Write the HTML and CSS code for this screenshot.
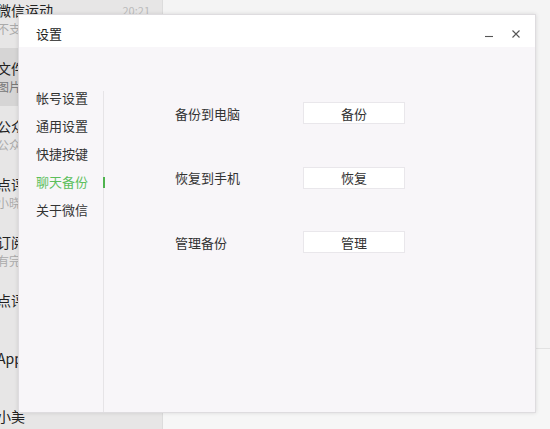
FILE: index.html
```html
<!DOCTYPE html>
<html lang="zh-CN">
<head>
    <meta charset="UTF-8">
    <title>设置</title>
    <link rel="stylesheet" href="styles.css">
</head>
<body>
    <!-- 背后的微信主窗口 -->
    <div class="app">
        <div class="chat-list">
            <div class="chat-item">
                <div class="chat-top"><span class="chat-name">微信运动</span><span class="chat-time">20:21</span></div>
                <div class="chat-sub">不支持的消息类型</div>
            </div>
            <div class="chat-item active">
                <div class="chat-top"><span class="chat-name">文件传输助手</span></div>
                <div class="chat-sub dark">图片</div>
            </div>
            <div class="chat-item">
                <div class="chat-top"><span class="chat-name">公众号</span></div>
                <div class="chat-sub">公众号消息</div>
            </div>
            <div class="chat-item">
                <div class="chat-top"><span class="chat-name">点评</span></div>
                <div class="chat-sub">小晓</div>
            </div>
            <div class="chat-item">
                <div class="chat-top"><span class="chat-name">订阅号</span></div>
                <div class="chat-sub">有完成</div>
            </div>
            <div class="chat-item">
                <div class="chat-top"><span class="chat-name">点评</span></div>
            </div>
            <div class="chat-item">
                <div class="chat-top"><span class="chat-name">Apple</span></div>
            </div>
            <div class="chat-item">
                <div class="chat-top"><span class="chat-name">小美</span></div>
            </div>
        </div>
        <div class="chat-pane">
            <div class="chat-input"></div>
        </div>
    </div>

    <!-- 设置窗口 -->
    <div class="dialog">
        <div class="titlebar">
            <span class="title">设置</span>
            <div class="win-buttons">
                <svg width="10" height="10" viewBox="0 0 10 10"><path d="M1 7.5h8" stroke="#555" stroke-width="1.1"/></svg>
                <svg width="10" height="10" viewBox="0 0 10 10"><path d="M1.5 1.5l7 7M8.5 1.5l-7 7" stroke="#555" stroke-width="1.1"/></svg>
            </div>
        </div>
        <div class="dialog-body">
            <div class="sidebar">
                <div class="menu-item">帐号设置</div>
                <div class="menu-item">通用设置</div>
                <div class="menu-item">快捷按键</div>
                <div class="menu-item active">聊天备份</div>
                <div class="menu-item">关于微信</div>
            </div>
            <div class="content">
                <div class="label">备份到电脑</div>
                <button class="btn">备份</button>
                <div class="label">恢复到手机</div>
                <button class="btn">恢复</button>
                <div class="label">管理备份</div>
                <button class="btn">管理</button>
            </div>
        </div>
    </div>
</body>
</html>
```

FILE: styles.css
```css
body {
    margin: 0;
    width: 550px;
    height: 429px;
    overflow: hidden;
    position: relative;
    font-family: "Noto Sans CJK SC", "Liberation Sans", sans-serif;
    font-size: 13px;
    color: #333;
}

/* 背后的主窗口 */
.app {
    display: flex;
    height: 100%;
    overflow: hidden;
}

.chat-list {
    width: 162px;
    height: 439px;
    overflow: hidden;
    background-color: #e7e6e6;
    border-right: 1px solid #dcdcdc;
    margin-top: -10px;
}

.chat-item {
    height: 58px;
    padding: 10px 12px 0 0;
    box-sizing: border-box;
    margin-left: -3px;
}

.chat-item.active {
    background-color: #d6d5d5;
}

.chat-top {
    display: flex;
    justify-content: space-between;
    font-size: 14px;
    color: #222;
    line-height: 20px;
}

.chat-time {
    font-size: 11px;
    color: #bbb;
}

.chat-sub {
    font-size: 12px;
    color: #aaa;
    line-height: 18px;
}

.chat-sub.dark {
    color: #777;
}

.chat-pane {
    flex: 1;
    background-color: #f4f4f4;
}

.chat-input {
    margin-top: 348px;
    border-top: 1px solid #e2e2e2;
    height: 80px;
    background-color: #f6f6f6;
}

/* 设置窗口 */
.dialog {
    position: absolute;
    left: 18px;
    top: 14px;
    width: 516px;
    height: 397px;
    background-color: #f8f6f9;
    border: 1px solid #dedcdf;
    box-shadow: 0 0 4px rgba(0, 0, 0, 0.12);
    display: flex;
    flex-direction: column;
}

.titlebar {
    height: 32px;
    background-color: #fff;
    display: flex;
    align-items: center;
    justify-content: space-between;
    padding: 4px 14px 0 17px;
    box-sizing: border-box;
}

.title {
    font-size: 13px;
    color: #222;
}

.win-buttons {
    display: flex;
    gap: 17px;
    padding-top: 2px;
}

.dialog-body {
    flex: 1;
    display: flex;
}

.sidebar {
    width: 85px;
    padding: 37px 0 0 17px;
    box-sizing: border-box;
    position: relative;
}

.sidebar::after {
    content: "";
    position: absolute;
    right: 0;
    top: 44px;
    bottom: 0;
    width: 1px;
    background-color: #e6e4e7;
}

.menu-item {
    height: 28px;
    line-height: 28px;
    color: #333;
    position: relative;
}

.menu-item.active {
    color: #5cbf5c;
}

.menu-item.active::after {
    content: "";
    position: absolute;
    right: -1px;
    top: 9px;
    width: 2px;
    height: 11px;
    background-color: #4fb34f;
    z-index: 1;
}

.content {
    padding: 55px 0 0 71px;
    display: grid;
    grid-template-columns: 128px 102px;
    grid-auto-rows: 22px;
    row-gap: 42.5px;
    align-items: center;
    align-content: start;
}

.label {
    color: #333;
}

.btn {
    height: 22px;
    width: 102px;
    background-color: #fff;
    border: 1px solid #e9e7eb;
    font-family: inherit;
    font-size: 13px;
    color: #333;
    padding: 0;
}
```
